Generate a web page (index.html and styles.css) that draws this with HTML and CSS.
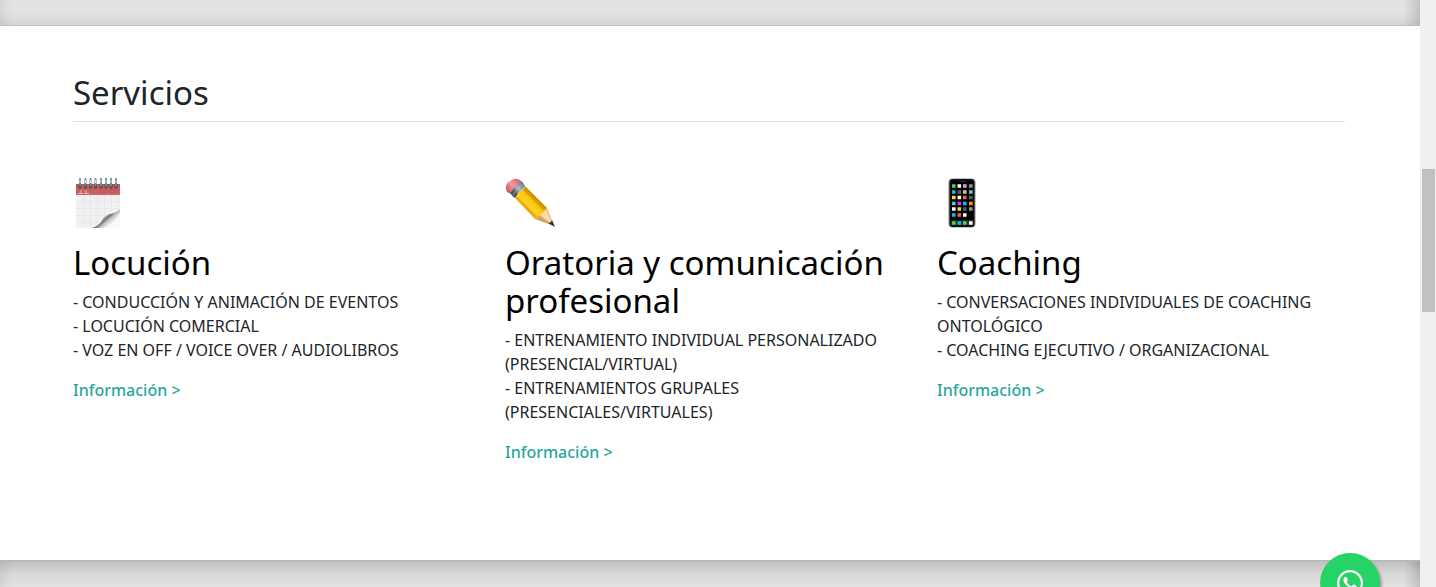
FILE: index.html
```html
<!DOCTYPE html>
<html lang="es">
<head>
<meta charset="utf-8">
<meta name="viewport" content="width=device-width, initial-scale=1">
<title>Servicios</title>
<link rel="stylesheet" href="styles.css">
</head>
<body>
<div class="page">
  <div class="band band-top"></div>
  <main class="services">
    <h2 class="section-title">Servicios</h2>
    <div class="cards">
      <article class="card">
        <svg class="icon" viewBox="0 0 50 50" aria-hidden="true">
          <defs>
            <linearGradient id="red" x1="0" y1="0" x2="0" y2="1"><stop offset="0" stop-color="#bd5658"/><stop offset="1" stop-color="#cc6668"/></linearGradient>
            <linearGradient id="curl" gradientUnits="userSpaceOnUse" x1="27" y1="35" x2="39" y2="49"><stop offset="0" stop-color="#f2f2f2"/><stop offset=".3" stop-color="#d0d0d0"/><stop offset=".45" stop-color="#707070"/><stop offset=".6" stop-color="#c4c4c4"/><stop offset=".85" stop-color="#f2f2f2"/><stop offset="1" stop-color="#fafafa"/></linearGradient>
          </defs>
          <path fill="#f1f1f1" d="M3 6h44v44H3z"/>
          <path fill="none" stroke="#e8e8e8" d="M10.500 17v32M17.500 17v32M24.500 17v32M31.500 17v20M38.500 17v16M45.500 17v12M3 23.500h44M3 30.500h43M3 37.500h28M3 44.500h22"/>
          <path fill="url(#red)" d="M3 6h44v11H3z"/>
          <path fill="none" stroke="#e9b4b4" d="M5 15.500h5M11 15.500h5M8 12v3M13 12v3"/>
          <path fill="none" stroke="#b84f54" stroke-dasharray="1 1" d="M25 12.500h9M36 12.500h9M25 14.500h9M36 14.500h9"/>
          <path fill="url(#curl)" d="M18 50Q28 47 29 42Q31 37 37 36Q44 35 47 31V36Q42 45 34 50Z"/>
          <path fill="#fafafa" d="M30 50Q41 46 47 35V50Z"/>
          <path stroke="#454545" stroke-width="3" stroke-linecap="round" d="M7 7v2M12.500 7v2M17.500 7v2M22.500 7v2M28 7v2M33 7v2M38 7v2M43 7v2"/>
          <path stroke="#75858f" stroke-width="2" stroke-linecap="round" d="M7 1v7M12.500 1v7M17.500 1v7M22.500 1v7M28 1v7M33 1v7M38 1v7M43 1v7"/>
          <path stroke="#d5e2ea" d="M7 2v3M12.500 2v3M17.500 2v3M22.500 2v3M28 2v3M33 2v3M38 2v3M43 2v3"/>
        </svg>
        <h3 class="card-title">Locución</h3>
        <p class="card-text">- CONDUCCIÓN Y ANIMACIÓN DE EVENTOS<br>- LOCUCIÓN COMERCIAL<br>- VOZ EN OFF / VOICE OVER / AUDIOLIBROS</p>
        <a class="more" href="#locucion">Información &gt;</a>
      </article>
      <article class="card">
        <svg class="icon" viewBox="0 0 50 50" aria-hidden="true">
          <defs>
            <linearGradient id="wood" gradientUnits="userSpaceOnUse" x1="18" y1="31" x2="31" y2="18"><stop offset="0" stop-color="#dfa006"/><stop offset=".26" stop-color="#f0b509"/><stop offset=".3" stop-color="#ffd52b"/><stop offset=".68" stop-color="#f8c40e"/><stop offset=".74" stop-color="#e2a800"/><stop offset="1" stop-color="#bd8500"/></linearGradient>
            <linearGradient id="metal" gradientUnits="userSpaceOnUse" x1="6" y1="18" x2="18" y2="6"><stop offset="0" stop-color="#444b53"/><stop offset=".35" stop-color="#59636d"/><stop offset=".6" stop-color="#a9bdcf"/><stop offset="1" stop-color="#66798c"/></linearGradient>
            <linearGradient id="rubber" gradientUnits="userSpaceOnUse" x1="2" y1="13" x2="14" y2="3"><stop offset="0" stop-color="#c95760"/><stop offset=".5" stop-color="#f59ba0"/><stop offset="1" stop-color="#d86b72"/></linearGradient>
          </defs>
          <path fill="url(#rubber)" d="M1 11Q0 6 5 3Q10-1 15 2L18 5L6 16L2 14Z"/>
          <path fill="url(#metal)" d="M16 3Q19 5 20 8L10 20Q7 18 5 15Q7 14 9 9Q13 8 16 3Z"/>
          <path fill="none" stroke="#b5c5d3" opacity=".5" d="M8 17q2-5 10-11"/>
          <path fill="url(#wood)" d="M20 8L42 30L36 39L30 41L10 20Q12 19 13 14Q18 13 20 8Z"/>
          <path fill="#edc98c" d="M42 29L49 47L30 41Q33 41 34 37Q39 36 42 29Z"/>
          <path fill="#d6a35e" d="M30 41Q33 41 34 37L49 48Z"/>
          <path fill="#f7ddac" d="M35 37Q38 35 40 32L48 46Z"/>
          <path fill="#30323a" d="M47 42L50 49L43 45Q46 45 47 42Z"/>
        </svg>
        <h3 class="card-title">Oratoria y comunicación profesional</h3>
        <p class="card-text">- ENTRENAMIENTO INDIVIDUAL PERSONALIZADO (PRESENCIAL/VIRTUAL)<br>- ENTRENAMIENTOS GRUPALES (PRESENCIALES/VIRTUALES)</p>
        <a class="more" href="#oratoria">Información &gt;</a>
      </article>
      <article class="card">
        <svg class="icon" viewBox="0 0 50 50" aria-hidden="true">
          <rect x="11.500" y=".5" width="27" height="49" rx="4" fill="#8d8d8d"/>
          <rect x="12.500" y="1" width="25" height="48" rx="3.500" fill="#111"/>
          <rect x="14" y="3" width="22" height="44" rx="2" fill="#000"/>
          <path fill="#292929" d="M22 3h7v1h-7zM14 42h22v5H14z"/>
          <g stroke-width="3.600" fill="none">
            <path stroke="#47d45e" d="M15 8h3.600M15 45h3.600M26 45h3.600"/>
            <path stroke="#fff" d="M20.500 8h3.600M20.500 19.500h3.600M15 31h3.600M26 37h3.600M32 45h3.600"/>
            <path stroke="#dc97e4" d="M26 8h3.600"/>
            <path stroke="#929292" d="M32 8h3.600M32 31h3.600"/>
            <path stroke="#14b7ef" d="M15 14h3.600M26 25.500h3.600M15 37h3.600M20.500 45h3.600"/>
            <path stroke="#5c5c5c" d="M20.500 14h3.600M32 19.500h3.600M26 31h3.600"/>
            <path stroke="#d5bd98" d="M26 14h3.600"/>
            <path stroke="#58cbe2" d="M32 14h3.600M15 25.500h3.600"/>
            <path stroke="#fdd545" d="M15 19.500h3.600M20.500 31h3.600"/>
            <path stroke="#f45e56" d="M26 19.500h3.600M20.500 37h3.600"/>
            <path stroke="#d43ce0" d="M20.500 25.500h3.600"/>
            <path stroke="#ff9307" d="M32 25.500h3.600"/>
          </g>
        </svg>
        <h3 class="card-title">Coaching</h3>
        <p class="card-text">- CONVERSACIONES INDIVIDUALES DE COACHING ONTOLÓGICO<br>- COACHING EJECUTIVO / ORGANIZACIONAL</p>
        <a class="more" href="#coaching">Información &gt;</a>
      </article>
    </div>
  </main>
  <div class="band band-bottom"></div>
</div>
<div class="scrollbar" aria-hidden="true"><div class="thumb"></div></div>
<a class="whatsapp" href="#whatsapp" aria-label="WhatsApp">
  <svg class="whatsapp-icon" viewBox="0 0 448 512" aria-hidden="true"><path fill="#fff" d="M380.900 97.100C339 55.100 283.200 32 223.900 32c-122.400 0-222 99.600-222 222 0 39.100 10.200 77.300 29.600 111L0 480l117.700-30.900c32.400 17.700 68.900 27 106.100 27h.1c122.300 0 224.100-99.600 224.100-222 0-59.300-25.200-115-67.100-157zm-157 341.600c-33.200 0-65.700-8.900-94-25.700l-6.700-4-69.800 18.300L72 359.200l-4.400-7c-18.500-29.400-28.200-63.300-28.200-98.200 0-101.700 82.800-184.500 184.600-184.500 49.300 0 95.600 19.200 130.400 54.100 34.800 34.900 56.200 81.200 56.100 130.500 0 101.800-84.900 184.600-186.600 184.600zm101.200-138.200c-5.500-2.800-32.800-16.200-37.900-18-5.100-1.900-8.800-2.800-12.500 2.800-3.700 5.600-14.300 18-17.600 21.800-3.200 3.700-6.500 4.200-12 1.400-32.600-16.300-54-29.100-75.500-66-5.700-9.800 5.700-9.100 16.300-30.300 1.800-3.700.9-6.900-.5-9.700-1.400-2.800-12.500-30.100-17.100-41.200-4.500-10.800-9.100-9.300-12.500-9.500-3.200-.2-6.900-.2-10.600-.2-3.700 0-9.700 1.400-14.800 6.900-5.100 5.600-19.400 19-19.400 46.300 0 27.300 19.900 53.700 22.600 57.400 2.800 3.700 39.100 59.700 94.800 83.800 35.200 15.200 49 16.500 66.600 13.900 10.700-1.600 32.800-13.400 37.400-26.400 4.600-13 4.600-24.100 3.200-26.400-1.300-2.500-5-3.900-10.500-6.600z"/></svg>
</a>
</body>
</html>
```
FILE: styles.css
```css
* {
  box-sizing: border-box;
}

body {
  display: flex;
  height: 100vh;
  margin: 0;
  overflow: hidden;
  background: #fff;
  color: #212529;
  font-family: "Noto Sans", "Open Sans", sans-serif;
  font-size: 16px;
  line-height: 24px;
}

.page {
  display: flex;
  flex: 1;
  flex-direction: column;
  min-width: 0;
}

.band {
  background-color: #e2e2e2;
}

.band-top {
  flex: none;
  height: 26px;
  border-bottom: 1px solid #bcbcbc;
  background-image:
    linear-gradient(to left, rgba(0, 0, 0, 0.14), transparent 16px),
    linear-gradient(to right, rgba(0, 0, 0, 0.05), transparent 12px),
    linear-gradient(to top, rgba(0, 0, 0, 0.06), transparent 12px);
}

.band-bottom {
  flex: 1;
  border-top: 1px solid #b6b6b6;
  background-image:
    linear-gradient(to left, rgba(0, 0, 0, 0.14), transparent 16px),
    linear-gradient(to right, rgba(0, 0, 0, 0.05), transparent 12px),
    linear-gradient(to bottom, rgba(0, 0, 0, 0.16), rgba(0, 0, 0, 0.05) 12px, transparent 26px);
}

.services {
  width: 100%;
  max-width: 1320px;
  margin: 0 auto;
  padding: 48px 25px 96px 23px;
}

.section-title {
  margin: 0;
  padding-bottom: 9px;
  border-bottom: 1px solid #dee2e6;
  font-size: 33px;
  font-weight: 400;
  line-height: 38px;
}

.cards {
  display: grid;
  grid-template-columns: repeat(3, minmax(0, 1fr));
  gap: 24px;
  padding-top: 56px;
}

.icon {
  display: block;
  width: 50px;
  height: 50px;
  margin-bottom: 16px;
}

.card-title {
  margin: 0 0 8px;
  color: #000;
  font-size: 33px;
  font-weight: 400;
  line-height: 38px;
}

.card-text {
  margin: 0 0 16px;
}

.more {
  display: block;
  color: #2aa69b;
  font-weight: 500;
  text-decoration: none;
}

.scrollbar {
  flex: none;
  width: 16px;
  padding: 169px 1px 0 2px;
  background: #f0f0f0;
}

.thumb {
  height: 143px;
  background: #c1c1c1;
}

.whatsapp {
  position: fixed;
  right: 56px;
  bottom: -26px;
  display: flex;
  align-items: center;
  justify-content: center;
  width: 60px;
  height: 60px;
  border-radius: 50%;
  background: #25d366;
  box-shadow: 2px 2px 3px #999;
}

.whatsapp-icon {
  width: 26px;
  height: 30px;
}
```
